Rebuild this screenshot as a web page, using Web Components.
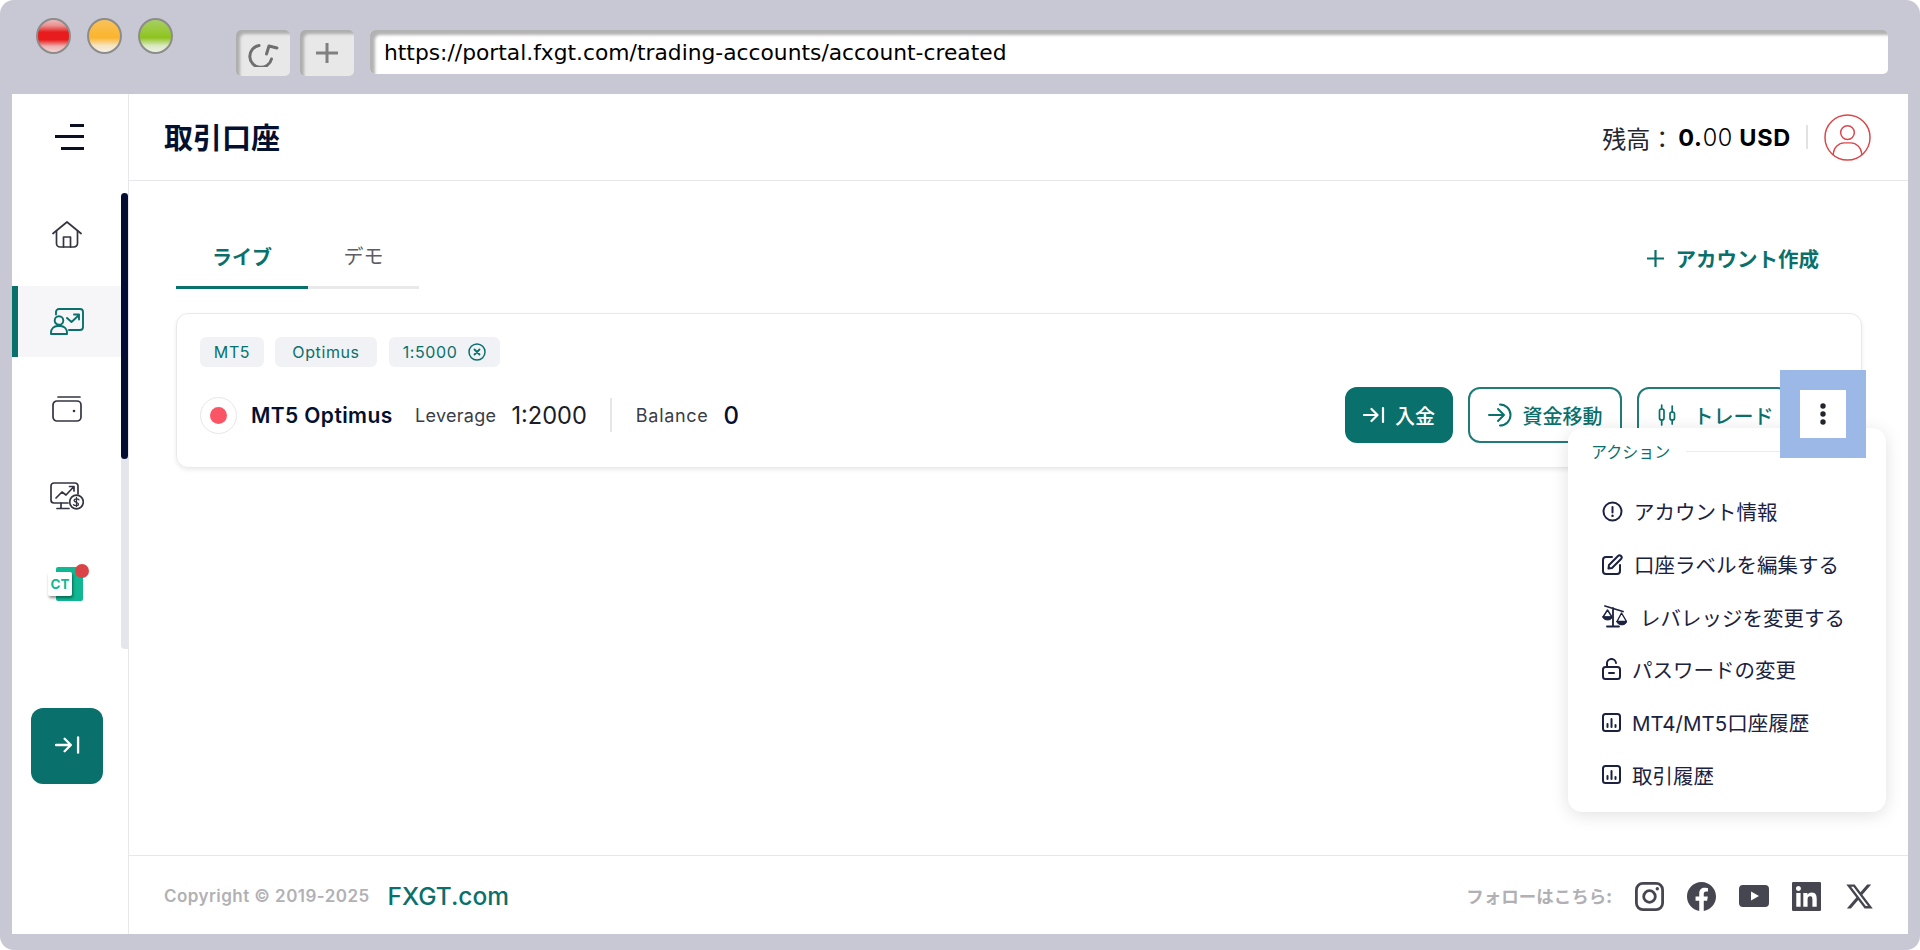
<!DOCTYPE html>
<html lang="ja">
<head>
<meta charset="utf-8">
<title>FXGT portal</title>
<style>
  html, body { margin: 0; padding: 0; background: #fff; }
  body { font-family: Inter, "Noto Sans CJK JP", sans-serif; color: #0b1233; }
</style>
</head>
<body>
<fx-window url="https://portal.fxgt.com/trading-accounts/account-created">
  <fx-sidebar></fx-sidebar>
  <fx-header title-text="取引口座"></fx-header>
  <fx-accounts></fx-accounts>
  <fx-footer></fx-footer>
  <fx-action-menu slot="over"></fx-action-menu>
  <fx-highlight slot="over"></fx-highlight>
</fx-window>

<script>
var font_stack = 'Inter, "Noto Sans CJK JP", sans-serif';

// browser chrome round the page
var template_window = document.createElement("template");
template_window.innerHTML = `
<style>
  :host { display: block; width: 1920px; height: 950px; box-sizing: border-box; position: relative;
          background: #c8c8d4; border-radius: 14px; overflow: hidden; font-family: ${font_stack}; }
  .bar { display: flex; height: 94px; box-sizing: border-box; padding: 18px 32px 0 36px; align-items: flex-start; }
  .lights { display: flex; gap: 16px; margin-right: 63px; }
  .light { width: 35px; height: 36px; border-radius: 50%; box-sizing: border-box; border: 2px solid #8c8c8c; }
  .red { background: linear-gradient(#efb9b9 0%, #ea8f8f 18%, #e81c1c 38%, #e81c1c 62%, #eeb0b0 82%, #f3d4d4 100%); }
  .orange { background: linear-gradient(#f8c25a 0%, #fbb42c 55%, #f6e4c2 80%, #f5efe4 100%); }
  .green { background: linear-gradient(#a6cf62 0%, #8fc41e 55%, #d9e8c2 80%, #ecf1e4 100%); }
  .ctl { width: 54px; height: 46px; margin-top: 12px; margin-right: 10px; border-radius: 5px; box-sizing: border-box;
         background: #e8e8e8; box-shadow: inset 4px 4px 3px #aeaeae; display: flex; align-items: center; justify-content: center; }
  .ctl + .ctl { margin-right: 16px; }
  .addr { flex: 1; height: 44px; margin-top: 12px; box-sizing: border-box; border-radius: 5px; background: #fff;
          box-shadow: inset 5px 5px 3px #b3b3b3; padding: 1px 0 0 14px; display: flex; align-items: center;
          font: 21.800px "DejaVu Sans", sans-serif; color: #000; }
  .page { display: grid; grid-template-columns: 117px 1fr; grid-template-rows: 87px 1fr 79px; height: 840px;
          margin: 0 12px; background: #fff; }
  ::slotted(fx-sidebar) { grid-row: 1 / 4; }
</style>
<div class="bar">
  <div class="lights"><div class="light red"></div><div class="light orange"></div><div class="light green"></div></div>
  <div class="ctl">
    <svg width="36" height="28" viewBox="0 0 36 28" fill="none" stroke="#6f6f6f" stroke-width="3" stroke-linecap="round" stroke-linejoin="round"><path d="M14 6.500A11 11 0 1 0 26.500 20"/><path d="M32 9 24 7 21.500 15"/></svg>
  </div>
  <div class="ctl">
    <svg width="24" height="20" viewBox="0 0 24 20" fill="none" stroke="#808080" stroke-width="3"><path d="M1 10h22M12 0v20"/></svg>
  </div>
  <div class="addr" id="url"></div>
</div>
<div class="page"><slot></slot></div>
<slot name="over"></slot>
`;
class FxWindow extends HTMLElement {
  constructor(){
    super();
    this.attachShadow({mode:"open"});
    this.shadowRoot.appendChild(template_window.content.cloneNode(true));
  }
  connectedCallback(){
    this.shadowRoot.querySelector("#url").textContent = this.getAttribute("url");
  }
}
customElements.define("fx-window", FxWindow);

// one row of the left rail
var template_nav = document.createElement("template");
template_nav.innerHTML = `
<style>
  :host { display: flex; height: 71px; align-items: center; justify-content: center; box-sizing: border-box;
          padding-left: 1px; position: relative; color: #333640; }
  :host([active]) { background: #f6f6f9; box-shadow: inset 6px 0 0 #0a706c; color: #0a706c; }
</style>
<slot></slot>
`;
class FxNavItem extends HTMLElement {
  constructor(){
    super();
    this.attachShadow({mode:"open"});
    this.shadowRoot.appendChild(template_nav.content.cloneNode(true));
  }
}
customElements.define("fx-nav-item", FxNavItem);

var template_sidebar = document.createElement("template");
template_sidebar.innerHTML = `
<style>
  :host { display: flex; flex-direction: column; box-sizing: border-box; width: 117px; border-right: 1px solid #e8e8ec; }
  .logo { height: 99px; display: flex; align-items: flex-start; padding: 30px 0 0 43px; box-sizing: border-box; }
  .rail { display: flex; height: 456px; }
  nav { flex: 1; display: flex; flex-direction: column; gap: 16px; padding-top: 6px; }
  .track { width: 7px; background: #e3e7ec; border-radius: 4px 0 0 4px; }
  .thumb { height: 266px; background: #030c32; border-radius: 4px; }
  .ct { position: relative; width: 36px; height: 36px; margin: 3px 0 0 -2px; }
  .ct .back { position: absolute; left: 8px; top: 1px; width: 27px; height: 34px; background: #0fb892; border-radius: 2px; }
  .ct .front { position: absolute; left: 0; top: 6px; width: 24px; height: 24px; background: #fff; border-radius: 2px;
               box-shadow: 1px 2px 3px rgba(0,0,0,.45); font: 700 13.500px Inter, sans-serif; color: #0fb892;
               display: flex; align-items: center; justify-content: center; }
  .ct .dot { position: absolute; left: 27px; top: -2px; width: 14px; height: 14px; border-radius: 50%; background: #d94447; }
  .collapse { width: 72px; height: 76px; margin: 59px 0 0 19px; background: #0a706c; border-radius: 12px;
              display: flex; align-items: center; justify-content: center; padding-bottom: 2px; box-sizing: border-box; }
</style>
<div class="logo">
  <svg width="30" height="26" viewBox="0 0 30 26" fill="none" stroke="#0b0f24" stroke-width="3"><path d="M15 1.500H29M0 12.500H29M6 24.500H29"/></svg>
</div>
<div class="rail">
  <nav>
    <fx-nav-item>
      <svg width="30" height="27" viewBox="0 0 30 27" fill="none" stroke="currentColor" stroke-width="1.700" stroke-linejoin="round" stroke-linecap="round"><path d="M1 12.500 15 1l14 11.500"/><path d="M4.500 10v12.500a3.500 3.500 0 0 0 3.500 3.500h14a3.500 3.500 0 0 0 3.500-3.500V10"/><path d="M11.500 26V16h7v10"/></svg>
    </fx-nav-item>
    <fx-nav-item active>
      <svg width="34" height="27" viewBox="0 0 34 27" fill="none" stroke="currentColor" stroke-width="1.900" stroke-linejoin="round" stroke-linecap="round"><circle cx="9" cy="12.500" r="4.300"/><path d="M1 26v-1.500A6.500 6.500 0 0 1 7.500 18h3a6.500 6.500 0 0 1 6.500 6.500V26z"/><path d="M6 6.500V4a3 3 0 0 1 3-3h21a3 3 0 0 1 3 3v15a3 3 0 0 1-3 3H19"/><path d="M17 10l4.500 4 7-6.500M24 6.500h5v5"/></svg>
    </fx-nav-item>
    <fx-nav-item>
      <svg width="30" height="26" viewBox="0 0 30 26" fill="none" stroke="currentColor" stroke-width="1.700" stroke-linecap="round"><path d="M6 1H28"/><rect x="1" y="5" width="28" height="20" rx="4"/><circle cx="22" cy="15" r="1.300" fill="currentColor" stroke="none"/></svg>
    </fx-nav-item>
    <fx-nav-item>
      <svg width="34" height="28" viewBox="0 0 34 28" fill="none" stroke="currentColor" stroke-width="1.700" stroke-linejoin="round" stroke-linecap="round"><path d="M28 12V4a3 3 0 0 0-3-3H4a3 3 0 0 0-3 3v14a3 3 0 0 0 3 3h14"/><path d="M11 21v5M7 26.500h12"/><path d="M6 16l6-6 4 3 7.500-8M19.500 4.500h4.500V9"/><circle cx="26.500" cy="20" r="6.800"/><path d="M29 17.800c-.8-1-3.800-1.500-4.700 0-1.400 2.600 4.700 2.200 4.200 4.700-.4 1.500-3.800 1.500-5 .2M26.500 15.500v9" stroke-width="1.300"/></svg>
    </fx-nav-item>
    <fx-nav-item>
      <div class="ct"><div class="back"></div><div class="front">CT</div><div class="dot"></div></div>
    </fx-nav-item>
  </nav>
  <div class="track"><div class="thumb"></div></div>
</div>
<div class="collapse">
  <svg width="25" height="20" viewBox="0 0 26 20" fill="none" stroke="#fff" stroke-width="2.400" stroke-linecap="round" stroke-linejoin="round"><path d="M1 10h15M10 3.500 16.500 10 10 16.500M24 2v16"/></svg>
</div>
`;
class FxSidebar extends HTMLElement {
  constructor(){
    super();
    this.attachShadow({mode:"open"});
    this.shadowRoot.appendChild(template_sidebar.content.cloneNode(true));
  }
}
customElements.define("fx-sidebar", FxSidebar);

var template_header = document.createElement("template");
template_header.innerHTML = `
<style>
  :host { display: flex; align-items: center; justify-content: space-between; box-sizing: border-box; height: 87px;
          border-bottom: 1px solid #e8e8ec; padding: 0 37px 0 35px; font-family: ${font_stack}; }
  h1 { margin: -2px 0 0; font-size: 29px; font-weight: 700; color: #04102f; }
  .right { display: flex; align-items: center; }
  .lbl { font-size: 24px; color: #24262f; margin-right: 4px; font-family: "Noto Sans CJK JP", sans-serif; }
  .amt { font-size: 23.500px; color: #000; font-weight: 700; letter-spacing: .7px; }
  .amt span { font-weight: 300; }
  .sep { width: 2px; height: 24px; background: #e2e2e2; margin: 0 16px 0 15px; }
  svg { display: block; }
</style>
<h1 id="title"></h1>
<div class="right">
  <span class="lbl">残高：</span><span class="amt">0.<span>00</span> USD</span>
  <div class="sep"></div>
  <svg width="47" height="47" viewBox="0 0 48 48" fill="none" stroke="#d9474b" stroke-width="1.500"><circle cx="24" cy="24" r="23"/><circle cx="24" cy="19" r="7"/><path d="M9.500 42c0-8 6-12.500 11-12.500h7c5 0 11 4.500 11 12.500"/></svg>
</div>
`;
class FxHeader extends HTMLElement {
  constructor(){
    super();
    this.attachShadow({mode:"open"});
    this.shadowRoot.appendChild(template_header.content.cloneNode(true));
  }
  connectedCallback(){
    this.shadowRoot.querySelector("#title").textContent = this.getAttribute("title-text");
  }
}
customElements.define("fx-header", FxHeader);

var template_chip = document.createElement("template");
template_chip.innerHTML = `
<style>
  :host { display: inline-flex; align-items: center; justify-content: center; gap: 11px; height: 30px; box-sizing: border-box; background: #f0f2f5;
          border-radius: 6px; color: #0a706c; font-size: 16px; letter-spacing: .6px; font-family: ${font_stack}; }
</style>
<slot></slot>
`;
class FxChip extends HTMLElement {
  constructor(){
    super();
    this.attachShadow({mode:"open"});
    this.shadowRoot.appendChild(template_chip.content.cloneNode(true));
  }
}
customElements.define("fx-chip", FxChip);

var template_button = document.createElement("template");
template_button.innerHTML = `
<style>
  :host { display: inline-flex; align-items: center; justify-content: center; gap: 10px; height: 56px; box-sizing: border-box;
          border: 2px solid #1f7c78; border-radius: 12px; color: #0a706c; background: #fff; font-size: 20px;
          font-family: "Noto Sans CJK JP", sans-serif; font-weight: 500; }
  :host([solid]) { background: #0a706c; border-color: #0a706c; color: #fff; }
</style>
<slot></slot>
`;
class FxButton extends HTMLElement {
  constructor(){
    super();
    this.attachShadow({mode:"open"});
    this.shadowRoot.appendChild(template_button.content.cloneNode(true));
  }
}
customElements.define("fx-button", FxButton);

// tabs plus the account card
var template_accounts = document.createElement("template");
template_accounts.innerHTML = `
<style>
  :host { display: block; box-sizing: border-box; padding: 44px 46px 0 47px; font-family: ${font_stack}; }
  .top { display: flex; justify-content: space-between; align-items: center; height: 64px; }
  .tabs { display: flex; height: 64px; }
  .tab { display: flex; align-items: center; justify-content: center; box-sizing: border-box; border-bottom: 3px solid #e9e9ec;
         font-size: 20px; font-family: "Noto Sans CJK JP", sans-serif; color: #5d5d63; }
  .tab.on { width: 132px; color: #0a706c; font-weight: 700; border-bottom-color: #0a706c; padding-top: 2px; }
  .tab.off { width: 111px; }
  .create { display: flex; align-items: center; gap: 12px; padding-right: 43px; color: #0a706c; font-size: 20.500px; font-weight: 700;
            font-family: "Noto Sans CJK JP", sans-serif; margin-top: 2px; }
  .card { margin-top: 24px; height: 155px; box-sizing: border-box; border: 1px solid #e9e9ec; border-radius: 12px;
          box-shadow: 0 2px 4px rgba(0,0,0,.08); padding: 23px 23px; }
  .chips { display: flex; gap: 11px; }
  .row { display: flex; align-items: center; margin-top: 20px; height: 56px; }
  .status { width: 37px; height: 37px; box-sizing: border-box; border: 1px solid #e7e7ea; border-radius: 50%; display: flex;
            align-items: center; justify-content: center; margin-right: 14px; }
  .status i { width: 17px; height: 17px; border-radius: 50%; background: #fa5565; display: block; }
  .name { font-size: 21px; font-weight: 600; color: #04102f; width: 164px; letter-spacing: .4px; }
  .k { font-size: 18px; color: #3a3c46; letter-spacing: .3px; margin-right: 15px; }
  .v { font-size: 23.600px; color: #1b1d28; font-weight: 400; }
  .bar { width: 2px; height: 34px; background: #e6e6e9; margin: 0 24px 0 23px; }
  .k.bal { letter-spacing: .7px; }
  .v.b { font-size: 24px; font-weight: 500; color: #04102f; }
  .btns { margin-left: auto; display: flex; gap: 15px; margin-right: 48px; }
</style>
<div class="top">
  <div class="tabs"><div class="tab on">ライブ</div><div class="tab off">デモ</div></div>
  <div class="create">
    <svg width="17" height="17" viewBox="0 0 17 17" fill="none" stroke="#0a706c" stroke-width="2.200"><path d="M0 8.500h17M8.500 0v17"/></svg>
    アカウント作成
  </div>
</div>
<div class="card">
  <div class="chips">
    <fx-chip style="width:64px">MT5</fx-chip>
    <fx-chip style="width:102px">Optimus</fx-chip>
    <fx-chip style="width:111px;margin-left:1px">1:5000
      <svg width="18" height="18" viewBox="0 0 18 18" fill="none" stroke="#0a706c" stroke-width="1.500" stroke-linecap="round"><circle cx="9" cy="9" r="8"/><path d="M6.500 6.500l5 5M11.500 6.500l-5 5" stroke-width="1.800"/></svg>
    </fx-chip>
  </div>
  <div class="row">
    <div class="status"><i></i></div>
    <span class="name">MT5 Optimus</span>
    <span class="k">Leverage</span><span class="v">1:2000</span>
    <div class="bar"></div>
    <span class="k bal">Balance</span><span class="v b">0</span>
    <div class="btns">
      <fx-button solid style="width:108px">
        <svg width="22" height="18" viewBox="0 0 22 18" fill="none" stroke="#fff" stroke-width="2.200" stroke-linecap="round" stroke-linejoin="round"><path d="M1 9h13M8.500 3 14.500 9 8.500 15M20 2v14"/></svg>
        入金
      </fx-button>
      <fx-button style="width:154px">
        <svg width="25" height="24" viewBox="0 0 25 24" fill="none" stroke="#0a706c" stroke-width="2" stroke-linecap="round" stroke-linejoin="round"><path d="M1 12h15M10 6l6 6-6 6"/><path d="M12 1.500a10.500 10.500 0 0 1 0 21"/></svg>
        資金移動
      </fx-button>
      <fx-button style="width:153px;gap:18px;padding-left:4px">
        <svg width="18" height="24" viewBox="0 0 18 24" fill="none" stroke="#0a706c" stroke-width="1.700" stroke-linecap="round"><rect x="1.500" y="6" width="4.500" height="11" rx="2"/><path d="M3.700 2v4M3.700 17v5"/><rect x="12" y="9" width="4.500" height="8" rx="2"/><path d="M14.200 3v6M14.200 17v4"/></svg>
        トレード
      </fx-button>
    </div>
  </div>
</div>
`;
class FxAccounts extends HTMLElement {
  constructor(){
    super();
    this.attachShadow({mode:"open"});
    this.shadowRoot.appendChild(template_accounts.content.cloneNode(true));
  }
}
customElements.define("fx-accounts", FxAccounts);

var template_menu_item = document.createElement("template");
template_menu_item.innerHTML = `
<style>
  :host { display: flex; align-items: center; height: 52.700px; color: #1b2240; font-size: 20.500px; font-family: ${font_stack}; }
  .icon { display: flex; align-items: center; }
</style>
<div class="icon"><slot name="icon"></slot></div>
<slot></slot>
`;
class FxMenuItem extends HTMLElement {
  constructor(){
    super();
    this.attachShadow({mode:"open"});
    this.shadowRoot.appendChild(template_menu_item.content.cloneNode(true));
    this.shadowRoot.querySelector(".icon").style.width = (this.getAttribute("indent") || 32) + "px";
  }
}
customElements.define("fx-menu-item", FxMenuItem);

// dropdown that hangs from the three dots
var template_menu = document.createElement("template");
template_menu.innerHTML = `
<style>
  :host { position: absolute; left: 1568px; top: 428px; width: 318px; height: 384px; box-sizing: border-box; background: #fff;
          border-radius: 14px; box-shadow: 0 3px 18px rgba(0,0,0,.12); padding: 12px 0 0 34px; font-family: ${font_stack}; }
  .head { display: flex; align-items: center; height: 22px; margin: 0 40px 23px -11px; color: #0a706c; font-size: 16px; gap: 16px; }
  .head i { flex: 1; height: 1px; background: #ececef; display: block; }
  svg { display: block; }
</style>
<div class="head">アクション<i></i></div>
<fx-menu-item>
  <svg slot="icon" width="21" height="21" viewBox="0 0 21 21" fill="none" stroke="#1b2240" stroke-width="2" stroke-linecap="round"><circle cx="10.500" cy="10.500" r="9"/><path d="M10.500 6v5.500"/><path d="M10.500 14.800v.1" stroke-width="2.400"/></svg>
  アカウント情報
</fx-menu-item>
<fx-menu-item>
  <svg slot="icon" width="21" height="21" viewBox="0 0 21 21" fill="none" stroke="#1b2240" stroke-width="2" stroke-linejoin="round" stroke-linecap="round"><path d="M10 3H4a3 3 0 0 0-3 3v11a3 3 0 0 0 3 3h11a3 3 0 0 0 3-3v-6"/><path d="M7 11 16 2a2 2 0 0 1 3 3l-9 9-3.500.5z"/></svg>
  口座ラベルを編集する
</fx-menu-item>
<fx-menu-item indent="38">
  <svg slot="icon" width="25" height="23" viewBox="0 0 25 23" fill="none" stroke="#1b2240" stroke-width="1.800" stroke-linejoin="round" stroke-linecap="round"><path d="M3 1l18 5.500M11 3v18.500M5 21.500h12"/><path d="M5.500 5 1 12h9z" stroke-width="1.400"/><path d="M1 12h9c0 4-9 4-9 0z" fill="#1b2240" stroke-width="1"/><path d="M19.500 8 15 16.500h9.500z" stroke-width="1.400"/><path d="M15 16.500h9.500c0 4.500-9.500 4.500-9.500 0z" fill="#1b2240" stroke-width="1"/></svg>
  レバレッジを変更する
</fx-menu-item>
<fx-menu-item indent="30">
  <svg slot="icon" width="20" height="22" viewBox="0 0 20 22" fill="none" stroke="#1b2240" stroke-width="2" stroke-linecap="round" stroke-linejoin="round"><path d="M5 9V6a4.500 4.500 0 0 1 9-1"/><rect x="1" y="9" width="17" height="12" rx="2.500"/><path d="M7 15h5"/></svg>
  パスワードの変更
</fx-menu-item>
<fx-menu-item indent="30">
  <svg slot="icon" width="19" height="19" viewBox="0 0 19 19" fill="none" stroke="#1b2240" stroke-width="2" stroke-linecap="round"><rect x="1" y="1" width="17" height="17" rx="2.500"/><path d="M5.500 14v-3M9.500 14V6M13.500 14v-2"/></svg>
  MT4/MT5口座履歴
</fx-menu-item>
<fx-menu-item indent="30">
  <svg slot="icon" width="19" height="19" viewBox="0 0 19 19" fill="none" stroke="#1b2240" stroke-width="2" stroke-linecap="round"><rect x="1" y="1" width="17" height="17" rx="2.500"/><path d="M5.500 14v-3M9.500 14V6M13.500 14v-2"/></svg>
  取引履歴
</fx-menu-item>
`;
class FxActionMenu extends HTMLElement {
  constructor(){
    super();
    this.attachShadow({mode:"open"});
    this.shadowRoot.appendChild(template_menu.content.cloneNode(true));
  }
}
customElements.define("fx-action-menu", FxActionMenu);

// blue marker frame drawn on top of the three dots button
var template_highlight = document.createElement("template");
template_highlight.innerHTML = `
<style>
  :host { position: absolute; left: 1780px; top: 370px; width: 86px; height: 88px; box-sizing: border-box; border: 20px solid #9bb8e6;
          background: #fff; display: flex; align-items: center; justify-content: center; }
</style>
<svg width="6" height="24" viewBox="0 0 6 24" fill="#23252c"><circle cx="3" cy="4" r="2.700"/><circle cx="3" cy="12" r="2.700"/><circle cx="3" cy="20" r="2.700"/></svg>
`;
class FxHighlight extends HTMLElement {
  constructor(){
    super();
    this.attachShadow({mode:"open"});
    this.shadowRoot.appendChild(template_highlight.content.cloneNode(true));
  }
}
customElements.define("fx-highlight", FxHighlight);

var template_footer = document.createElement("template");
template_footer.innerHTML = `
<style>
  :host { display: flex; align-items: center; justify-content: space-between; box-sizing: border-box; height: 79px;
          border-top: 1px solid #e8e8ec; padding: 2px 35px 0 35px; font-family: ${font_stack}; }
  .left, .right { display: flex; align-items: center; }
  .copy { font-size: 17px; font-weight: 600; letter-spacing: .45px; color: #b1b1b5; margin-right: 18px; }
  .brand { font-size: 24.500px; font-weight: 500; color: #0a706c; }
  .follow { font-size: 17.500px; font-weight: 700; color: #b1b1b5; font-family: "Noto Sans CJK JP", sans-serif; margin-right: 23px; margin-top: -2px; }
  .icons { display: flex; align-items: center; gap: 23px; }
  .x { margin-left: 2px; }
  svg { display: block; }
</style>
<div class="left"><span class="copy">Copyright © 2019-2025</span><span class="brand">FXGT.com</span></div>
<div class="right">
  <span class="follow">フォローはこちら:</span>
  <div class="icons">
    <svg width="29" height="29" viewBox="0 0 29 29" fill="none" stroke="#45464f" stroke-width="2.800"><rect x="1.400" y="1.400" width="26.200" height="26.200" rx="6.500"/><circle cx="14.500" cy="14.500" r="5.800"/><circle cx="22.300" cy="6.700" r="1.700" fill="#45464f" stroke="none"/></svg>
    <svg width="29" height="29" viewBox="0 0 24 24" fill="#45464f"><path d="M24 12.073c0-6.627-5.373-12-12-12s-12 5.373-12 12c0 5.990 4.388 10.954 10.125 11.854v-8.385H7.078v-3.470h3.047V9.430c0-3.007 1.792-4.669 4.533-4.669 1.312 0 2.686.235 2.686.235v2.953H15.830c-1.491 0-1.956.925-1.956 1.874v2.250h3.328l-.532 3.470h-2.796v8.385C19.612 23.027 24 18.062 24 12.073z"/></svg>
    <svg width="30" height="22" viewBox="0 0 30 22" fill="#45464f"><path fill-rule="evenodd" d="M4 0h22a4 4 0 0 1 4 4v14a4 4 0 0 1-4 4H4a4 4 0 0 1-4-4V4a4 4 0 0 1 4-4zm8 6.500v9l8-4.500z"/></svg>
    <svg width="29" height="29" viewBox="0 0 24 24" fill="#45464f"><path d="M20.447 20.452h-3.554v-5.569c0-1.328-.027-3.037-1.852-3.037-1.853 0-2.136 1.445-2.136 2.939v5.667H9.351V9h3.414v1.561h.046c.477-.9 1.637-1.850 3.370-1.850 3.601 0 4.267 2.370 4.267 5.455v6.286zM5.337 7.433c-1.144 0-2.063-.926-2.063-2.065 0-1.138.920-2.063 2.063-2.063 1.140 0 2.064.925 2.064 2.063 0 1.139-.925 2.065-2.064 2.065zm1.782 13.019H3.555V9h3.564v11.452zM1 0h22a1 1 0 0 1 1 1v22a1 1 0 0 1-1 1H1a1 1 0 0 1-1-1V1a1 1 0 0 1 1-1z" fill-rule="evenodd"/></svg>
    <svg class="x" width="27" height="25" viewBox="1 2 22 20" fill="#45464f"><path d="M18.244 2.250h3.308l-7.227 8.260 8.502 11.240H16.170l-5.214-6.817L4.990 21.750H1.680l7.730-8.835L1.254 2.250H8.080l4.713 6.231zm-1.161 17.520h1.833L7.084 4.126H5.117z"/></svg>
  </div>
</div>
`;
class FxFooter extends HTMLElement {
  constructor(){
    super();
    this.attachShadow({mode:"open"});
    this.shadowRoot.appendChild(template_footer.content.cloneNode(true));
  }
}
customElements.define("fx-footer", FxFooter);
</script>
</body>
</html>
